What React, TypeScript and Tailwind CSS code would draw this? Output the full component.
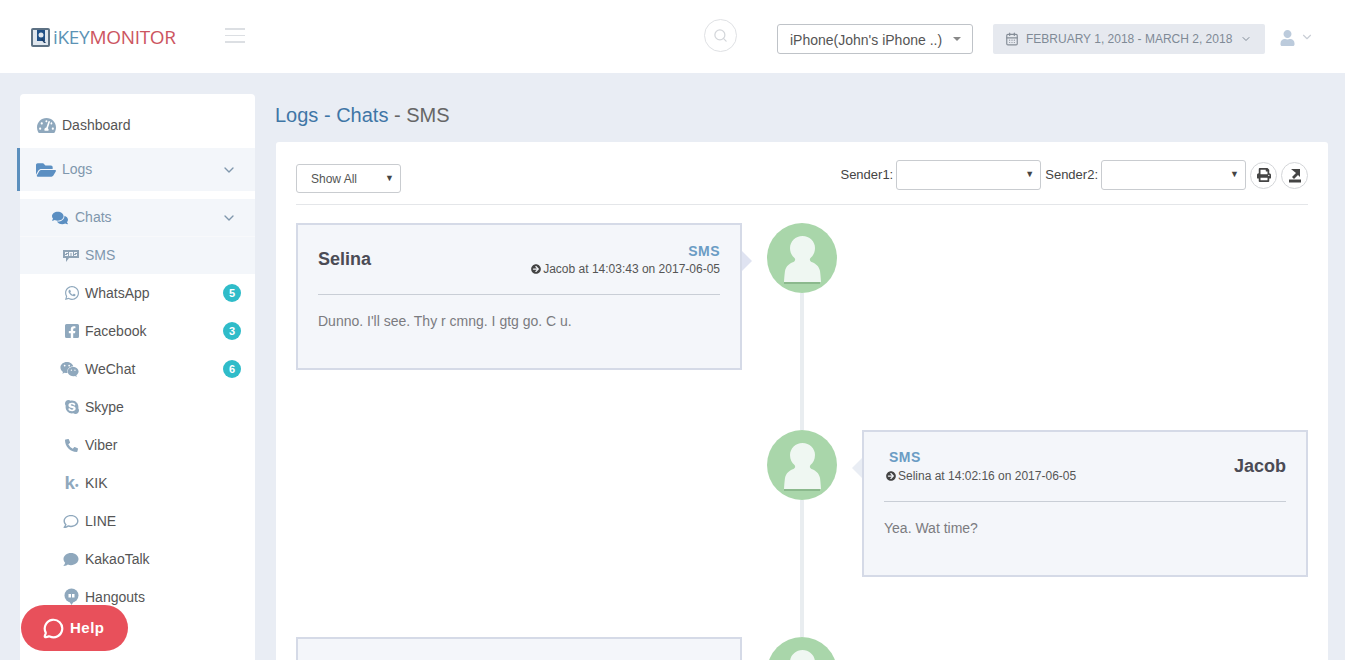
import type { ReactNode } from "react";
import {
  FaTachometerAlt,
  FaFolderOpen,
  FaComments,
  FaWhatsapp,
  FaFacebookSquare,
  FaWeixin,
  FaSkype,
  FaPhoneAlt,
  FaRegComment,
  FaComment,
  FaPrint,
  FaUser,
  FaArrowCircleRight,
} from "react-icons/fa";
import { ChevronDown, MessageCircle, CalendarDays, Search } from "lucide-react";

function SmsIcon() {
  return (
    <svg width="16" height="14" viewBox="0 0 16 14" className="text-[#8fa3b5]">
      <path d="M0 1h16v8H6l-3 4V9H0z" fill="currentColor" />
      <path d="M2 3h3v1H3v1h2v2H2V6h2V5H2zM6 3h4v4H9V4H8.500v3h-1V4H7v3H6zM11 3h3v1h-2v1h2v2h-3V6h2V5h-2z" fill="#f3f6fa" />
    </svg>
  );
}

function HangoutsIcon() {
  return (
    <svg width="15" height="18" viewBox="0 0 15 18" className="text-[#8fa8bd]">
      <circle cx="7.500" cy="7.500" r="7" fill="currentColor" />
      <path d="M5 13h5l-2.500 4z" fill="currentColor" />
      <rect x="4.500" y="6" width="2.500" height="3.500" fill="#fff" />
      <rect x="8" y="6" width="2.500" height="3.500" fill="#fff" />
    </svg>
  );
}

function Avatar() {
  return (
    <div className="w-[70px] h-[70px] rounded-full bg-[#a9d6aa] shrink-0 flex items-center justify-center">
      <svg width="70" height="70" viewBox="0 0 70 70">
        <rect x="17" y="59" width="36" height="2" fill="#8bb98d" />
        <path
          d="M35.500 13c7 0 12.500 5.500 12.500 12 0 4.500-2 8-4.500 10-1 1-1 3 1 4 4 1.500 7.500 4 8.500 9 .5 4 .8 7 1 11H17c.2-4 .5-7 1-11 1-5 4.500-7.500 8.500-9 2-1 2-3 1-4-2.500-2-4.500-5.500-4.500-10 0-6.500 5.500-12 12.500-12z"
          fill="#eff7f2"
        />
      </svg>
    </div>
  );
}

function Card({ name, meta, text, side }: { name?: string; meta?: string; text?: string; side: "left" | "right" }) {
  const head =
    side === "left" ? (
      <div className="flex justify-between items-start h-[59px]">
        <div className="text-[18px] font-bold text-[#4b4b55] mt-[14px] leading-5">{name}</div>
        <div className="text-right mt-[7px]">
          <div className="text-[14px] font-bold text-[#6b9cc4] tracking-[0.5px] leading-[18px]">SMS</div>
          {meta && (
            <div className="flex items-center justify-end gap-[2px] mt-[1px] text-[12px] text-[#555] leading-[16px]">
              <FaArrowCircleRight className="text-[10px] text-[#444]" />
              {meta}
            </div>
          )}
        </div>
      </div>
    ) : (
      <div className="flex justify-between items-start h-[59px]">
        <div className="mt-[6px]">
          <div className="text-[14px] font-bold text-[#6b9cc4] tracking-[0.5px] leading-[18px] pl-[5px]">SMS</div>
          <div className="flex items-center gap-[2px] pl-[2px] mt-[2px] text-[12px] text-[#555] leading-[16px]">
            <FaArrowCircleRight className="text-[10px] text-[#444]" />
            {meta}
          </div>
        </div>
        <div className="text-[18px] font-bold text-[#4b4b55] mt-[14px] leading-5">{name}</div>
      </div>
    );

  return (
    <div className="relative w-[446px] h-[147px] border-2 border-[#d5dae7] bg-[#f4f6fa] px-[20px] pt-[10px] shrink-0">
      {head}
      <div className="h-px bg-[#c9ced6]" />
      <div className="text-[14px] text-[#7b7b80] mt-[16px] leading-5">{text}</div>
      {side === "left" ? (
        <div className="absolute top-[26px] -right-[12px] w-0 h-0 border-y-[10px] border-y-transparent border-l-[10px] border-l-[#dfe3f1]" />
      ) : (
        <div className="absolute top-[26px] -left-[12px] w-0 h-0 border-y-[10px] border-y-transparent border-r-[10px] border-r-[#e9edf4]" />
      )}
    </div>
  );
}

function TimelineRow({ children, side }: { children?: ReactNode; side: "left" | "right" }) {
  return (
    <div className="flex h-[207px] shrink-0">
      <div className="w-[446px] shrink-0">{side === "left" && children}</div>
      <div className="w-[120px] shrink-0 flex flex-col items-center">
        <Avatar />
        <div className="w-[4px] flex-1 bg-[#e9edf0]" />
      </div>
      <div className="w-[446px] shrink-0">{side === "right" && children}</div>
    </div>
  );
}

function SubItem({ icon, label, badge }: { icon: ReactNode; label: string; badge?: number }) {
  return (
    <div className="h-[38px] flex items-center text-[14px] text-[#555]">
      <div className="w-[65px] pl-[38px] flex justify-center shrink-0 text-[#8fa8bd]">{icon}</div>
      <span>{label}</span>
      {badge !== undefined && (
        <span className="ml-auto mr-[14px] w-[18px] h-[18px] rounded-full bg-[#2fbcc9] text-white text-[11px] font-bold flex items-center justify-center">
          {badge}
        </span>
      )}
    </div>
  );
}

function Sidebar() {
  return (
    <aside className="relative w-[235px] shrink-0 bg-white rounded-t-[4px] self-stretch">
      <div className="h-[54px] pt-[8px] flex items-center text-[14px] text-[#555]">
        <FaTachometerAlt className="ml-[17px] w-[19px] h-[19px] text-[#8fa8bd]" />
        <span className="ml-[6px]">Dashboard</span>
      </div>
      <div className="relative h-[43px] bg-[#f3f6fa] flex items-center text-[14px] text-[#7f97ad]">
        <div className="absolute -left-[3px] top-0 w-[3px] h-full bg-[#5b8fbd]" />
        <FaFolderOpen className="ml-[16px] w-[20px] h-[18px] text-[#5b8fc2]" />
        <span className="ml-[6px]">Logs</span>
        <ChevronDown className="ml-auto mr-[18px] w-4 h-4 text-[#7f97ad]" />
      </div>
      <div className="h-[8px]" />
      <div className="h-[37px] bg-[#f3f6fa] flex items-center text-[14px] text-[#7f97ad]">
        <FaComments className="ml-[32px] w-[16px] h-[16px] text-[#5b8fc2]" />
        <span className="ml-[7px]">Chats</span>
        <ChevronDown className="ml-auto mr-[18px] w-4 h-4 text-[#7f97ad]" />
      </div>
      <div className="h-px bg-[#f8f9fb]" />
      <div className="h-[37px] bg-[#f3f6fa] flex items-center text-[14px] text-[#7f97ad]">
        <div className="w-[65px] pl-[36px] flex justify-center shrink-0">
          <SmsIcon />
        </div>
        <span>SMS</span>
      </div>
      <SubItem icon={<FaWhatsapp className="w-[16px] h-[16px]" />} label="WhatsApp" badge={5} />
      <SubItem icon={<FaFacebookSquare className="w-[16px] h-[16px]" />} label="Facebook" badge={3} />
      <SubItem icon={<FaWeixin className="w-[19px] h-[17px] -ml-[4px]" />} label="WeChat" badge={6} />
      <SubItem icon={<FaSkype className="w-[16px] h-[16px]" />} label="Skype" />
      <SubItem icon={<FaPhoneAlt className="w-[13px] h-[13px] -scale-x-100 rotate-90" />} label="Viber" />
      <SubItem icon={<span className="text-[19px] font-bold leading-none -mt-[2px]">k<span className="text-[10px]">•</span></span>} label="KIK" />
      <SubItem icon={<FaRegComment className="w-[18px] h-[15px] -ml-[2px]" />} label="LINE" />
      <SubItem icon={<FaComment className="w-[18px] h-[15px] -ml-[2px]" />} label="KakaoTalk" />
      <SubItem icon={<HangoutsIcon />} label="Hangouts" />
    </aside>
  );
}

function Header() {
  return (
    <header className="h-[73px] bg-white flex items-center shrink-0">
      <div className="ml-[31px] flex items-center w-[194px] mt-[2px]">
        <svg width="19" height="19" viewBox="0 0 19 19" className="shrink-0">
          <rect x="0" y="0" width="19" height="19" rx="2" fill="#5d7184" />
          <rect x="2" y="2" width="15" height="15" fill="#dfe6ee" />
          <rect x="6" y="2" width="8" height="11" fill="#1f4f86" />
          <circle cx="10" cy="7" r="2.500" fill="#dfe6ee" />
          <path d="M11 10l4 5h-2l-3-4z" fill="#1f3f66" />
        </svg>
        <span className="ml-[3px] text-[19px] leading-none tracking-[-0.3px] font-['Open_Sans',sans-serif]">
          <span className="text-[#5d93b5]">iKEY</span>
          <span className="text-[#cc5560]">MONITOR</span>
        </span>
      </div>
      <div className="w-[20px] flex flex-col gap-[5px] -mt-[2px]">
        <div className="h-[1.500px] bg-[#dcdfe3]" />
        <div className="h-[1.500px] bg-[#dcdfe3]" />
        <div className="h-[1.500px] bg-[#dcdfe3]" />
      </div>
      <div className="ml-[459px] -mt-[2px] w-[33px] h-[33px] rounded-full border border-[#dfe1e4] flex items-center justify-center">
        <Search className="w-[15px] h-[15px] text-[#d3d6da]" />
      </div>
      <div className="ml-[40px] w-[196px] h-[30px] mt-[5px] pt-[2px] border border-[#bfc3c8] rounded-[3px] flex items-center pl-[12px] text-[14px] text-[#555]">
        iPhone(John's iPhone ..)
        <span className="ml-[11px] -mt-[2px] w-0 h-0 border-x-[4px] border-x-transparent border-t-[4px] border-t-[#888]" />
      </div>
      <div className="ml-[20px] w-[272px] h-[30px] mt-[5px] bg-[#e6e9ef] rounded-[2px] flex items-center pl-[12px] text-[12px] text-[#7f8a96]">
        <CalendarDays className="w-[14px] h-[14px] text-[#858d97]" />
        <span className="ml-[7px]">FEBRUARY 1, 2018 - MARCH 2, 2018</span>
        <ChevronDown className="ml-[8px] w-[12px] h-[12px]" />
      </div>
      <FaUser className="ml-[15px] mt-[2px] w-[15px] h-[16px] text-[#bccbdc]" />
      <ChevronDown className="ml-[5px] w-[14px] h-[14px] text-[#c9ced6]" />
    </header>
  );
}

function SelectBox({ className, children }: { className: string; children?: ReactNode }) {
  return (
    <div className={className}>
      {children}
      <span className="ml-auto text-[9px] text-[#444] pr-[6px]">▼</span>
    </div>
  );
}

function Toolbar() {
  return (
    <div className="h-[63px] border-b border-[#e4e6e9] flex items-start text-[13px] text-[#444]">
      <SelectBox className="mt-[22px] w-[105px] h-[29px] border border-[#c9ccd0] rounded-[3px] flex items-center pl-[14px] text-[12px] text-[#555]">
        Show All
      </SelectBox>
      <div className="ml-auto flex items-center mt-[18px]">
        <span>Sender1:</span>
        <SelectBox className="ml-[3px] w-[145px] h-[30px] border border-[#c9ccd0] rounded-[3px] flex items-center" />
        <span className="ml-[4px]">Sender2:</span>
        <SelectBox className="ml-[3px] w-[145px] h-[30px] border border-[#c9ccd0] rounded-[3px] flex items-center" />
        <div className="ml-[4px] w-[27px] h-[27px] rounded-full border border-[#d4d6d9] flex items-center justify-center">
          <FaPrint className="w-[14px] h-[14px] text-[#444]" />
        </div>
        <div className="ml-[4px] w-[27px] h-[27px] rounded-full border border-[#d4d6d9] flex items-center justify-center">
          <svg width="14" height="15" viewBox="0 0 14 15">
            <path d="M3 1h9v8l-2-2-4 4-2-2 4-4z" fill="#444" />
            <rect x="1" y="11.500" width="12" height="3" fill="#444" />
          </svg>
        </div>
      </div>
    </div>
  );
}

export default function App() {
  return (
    <div className="relative h-[660px] overflow-hidden flex flex-col bg-[#e9edf4] font-['Liberation_Sans',Arial,sans-serif]">
      <Header />
      <div className="flex-1 flex min-h-0 pt-[21px] pl-[20px] pr-[17px] gap-[21px]">
        <Sidebar />
        <main className="flex-1 min-w-0">
          <h1 className="text-[20px] leading-[22px] h-[48px] -ml-[1px] pt-[10px] text-[#666]">
            <span className="text-[#3f76a6]">Logs - Chats</span> - SMS
          </h1>
          <section className="bg-white rounded-t-[3px] px-[20px] h-[600px]">
            <Toolbar />
            <div className="flex flex-col pt-[18px]">
              <TimelineRow side="left">
                <Card side="left" name="Selina" meta="Jacob at 14:03:43 on 2017-06-05" text="Dunno. I'll see. Thy r cmng. I gtg go. C u." />
              </TimelineRow>
              <TimelineRow side="right">
                <Card side="right" name="Jacob" meta="Selina at 14:02:16 on 2017-06-05" text="Yea. Wat time?" />
              </TimelineRow>
              <TimelineRow side="left">
                <Card side="left" />
              </TimelineRow>
            </div>
          </section>
        </main>
      </div>
      <div className="absolute left-[21px] top-[605px] w-[107px] h-[46px] rounded-full bg-[#e8505b] flex items-center pl-[22px] text-white text-[15px] font-bold tracking-[0.5px]">
        <MessageCircle className="w-[21px] h-[21px]" strokeWidth={2.5} />
        <span className="ml-[6px]">Help</span>
      </div>
    </div>
  );
}
